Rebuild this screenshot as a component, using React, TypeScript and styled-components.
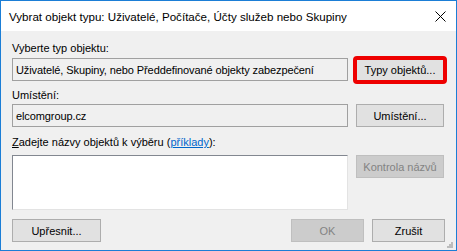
import React from 'react';
import styled, { createGlobalStyle } from 'styled-components';

const GlobalStyle = createGlobalStyle`
  html, body { margin: 0; padding: 0; background: #fff; }
  body {
    font-family: "Liberation Sans", Arial, sans-serif;
    font-size: 11px;
    color: #000;
  }
`;

const Window = styled.div`
  width: 457px;
  height: 251px;
  box-sizing: border-box;
  border: 1px solid #1b7ed6;
  display: flex;
  flex-direction: column;
  background: #f0f0f0;
  position: relative;
`;

const TitleBar = styled.div`
  height: 30px;
  flex: none;
  background: #fff;
  display: flex;
  align-items: center;
  justify-content: space-between;
  padding: 0 10px 0 8px;
  font-size: 11.6px;
`;

const Content = styled.div`
  flex: 1;
  padding: 11px 11px 0;
  display: flex;
  flex-direction: column;
`;

const Label = styled.div<{ $gap?: number }>`
  line-height: 13px;
  height: 13px;
  margin-bottom: ${p => p.$gap ?? 3}px;
  white-space: nowrap;
  u { text-decoration: underline; }
  a { color: #0066cc; text-decoration: underline; }
`;

const Row = styled.div<{ $after?: number }>`
  display: flex;
  gap: 8px;
  align-items: flex-start;
  margin-bottom: ${p => p.$after ?? 0}px;
`;

const TextBox = styled.div<{ $tall?: boolean }>`
  width: 336px;
  height: ${p => (p.$tall ? 55 : 23)}px;
  box-sizing: border-box;
  display: flex;
  align-items: center;
  padding: 0 3px;
  white-space: nowrap;
  overflow: hidden;
  ${p =>
    p.$tall
      ? `background:#fff; border:1px solid; border-color:#828790 #e3e3e3 #e3e3e3 #828790;`
      : `background:#f0f0f0; border:1px solid #a0a0a0; letter-spacing:-0.1px;`}
`;

const Button = styled.div<{ $w?: number; $disabled?: boolean }>`
  width: ${p => p.$w ?? 88}px;
  height: 23px;
  box-sizing: border-box;
  display: flex;
  align-items: center;
  justify-content: center;
  white-space: nowrap;
  border: 1px solid ${p => (p.$disabled ? '#bfbfbf' : '#adadad')};
  background: ${p => (p.$disabled ? '#cccccc' : '#e1e1e1')};
  color: ${p => (p.$disabled ? '#838383' : '#000')};
  position: relative;
`;

const Highlight = styled.div`
  position: relative;
  &::after {
    content: "";
    position: absolute;
    inset: -2px -3px -3px -3px;
    border: 4px solid #ee0000;
    border-radius: 4px;
    pointer-events: none;
  }
`;

const Footer = styled.div`
  display: flex;
  gap: 8px;
  margin-top: 9px;
`;

const Spacer = styled.div`
  flex: 1;
`;

const Grip = styled.svg`
  position: absolute;
  right: 3px;
  bottom: 2px;
`;

const CloseIcon = () => (
  <svg width="11" height="11" viewBox="0 0 11 11">
    <path d="M0.5 0.5 L10.5 10.5 M10.5 0.5 L0.5 10.5" stroke="#000" strokeWidth="1" fill="none" />
  </svg>
);

export default function App() {
  return (
    <>
      <GlobalStyle />
      <Window>
        <TitleBar>
          <span>Vybrat objekt typu: Uživatelé, Počítače, Účty služeb nebo Skupiny</span>
          <CloseIcon />
        </TitleBar>
        <Content>
          <Label>Vyberte typ objektu:</Label>
          <Row $after={8}>
            <TextBox>Uživatelé, Skupiny, nebo Předdefinované objekty zabezpečení</TextBox>
            <Highlight>
              <Button>Typy objektů...</Button>
            </Highlight>
          </Row>
          <Label $gap={2}>Umístění:</Label>
          <Row $after={9}>
            <TextBox>elcomgroup.cz</TextBox>
            <Button>Umístění...</Button>
          </Row>
          <Label $gap={6}>
            <u>Z</u>adejte názvy objektů k výběru (<a>příklady</a>):
          </Label>
          <Row>
            <TextBox $tall />
            <Button $disabled>Kontrola názvů</Button>
          </Row>
          <Footer>
            <Button $w={89}>Upřesnit...</Button>
            <Spacer />
            <Button $w={73} $disabled>OK</Button>
            <Button $w={73}>Zrušit</Button>
          </Footer>
        </Content>
        <Grip width="6" height="6" viewBox="0 0 6 6">
          <rect x="4" y="0" width="2" height="2" fill="#bcbcbc" />
          <rect x="2" y="2" width="2" height="2" fill="#bcbcbc" />
          <rect x="4" y="2" width="2" height="2" fill="#bcbcbc" />
          <rect x="0" y="4" width="2" height="2" fill="#bcbcbc" />
          <rect x="2" y="4" width="2" height="2" fill="#bcbcbc" />
          <rect x="4" y="4" width="2" height="2" fill="#bcbcbc" />
        </Grip>
      </Window>
    </>
  );
}
